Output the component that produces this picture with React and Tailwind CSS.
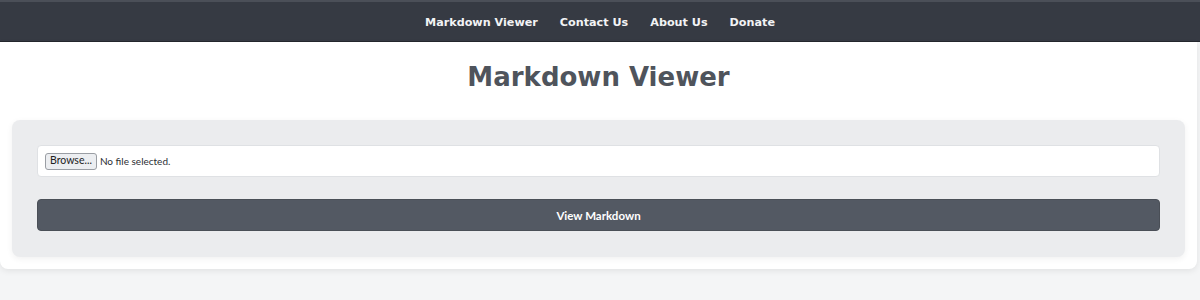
import React from 'react';

const links = ['Markdown Viewer', 'Contact Us', 'About Us', 'Donate'];

function App() {
  return (
    <div className="min-h-[300px] bg-[#f4f5f6]">
      <nav className="h-[42px] bg-[#363a43] border-t-2 border-t-[#4b4f58] border-b border-b-[#24272d] flex items-center justify-center gap-[22px] font-['DejaVu_Sans',sans-serif]">
        {links.map((l) => (
          <a key={l} href="#" className="text-[11.2px] font-bold text-[#f2f3f5] pt-[3px]">
            {l}
          </a>
        ))}
      </nav>
      <div className="mr-[3px] bg-white rounded-b-lg shadow-[0_2px_6px_rgba(0,0,0,0.08)] px-3 pb-[12px]">
        <h1 className="text-center pt-[17px] pb-[25px] leading-[36px] text-[26px] font-bold text-[#4f545c] font-['DejaVu_Sans',sans-serif]">
          Markdown Viewer
        </h1>
        <div className="bg-[#ebecee] rounded-lg pt-[25px] px-[25px] pb-[26px] shadow-[0_2px_6px_rgba(0,0,0,0.06)] font-['Lato',sans-serif]">
          <div className="h-[32px] bg-white border border-[#dfe1e4] rounded flex items-center pl-[7px] text-[10px] text-[#2b2e33]">
            <span className="h-[17px] px-[4px] flex items-center border border-[#9a9ea4] rounded-[3px] bg-[#eceef1] text-[#222] text-[10.5px]">
              Browse...
            </span>
            <span className="ml-[3px]">No file selected.</span>
          </div>
          <button className="mt-[22px] w-full h-[32px] bg-[#535963] border border-[#4a4f57] rounded text-white text-[11.5px] font-bold pt-[1px]">
            View Markdown
          </button>
        </div>
      </div>
    </div>
  );
}

export default App;
